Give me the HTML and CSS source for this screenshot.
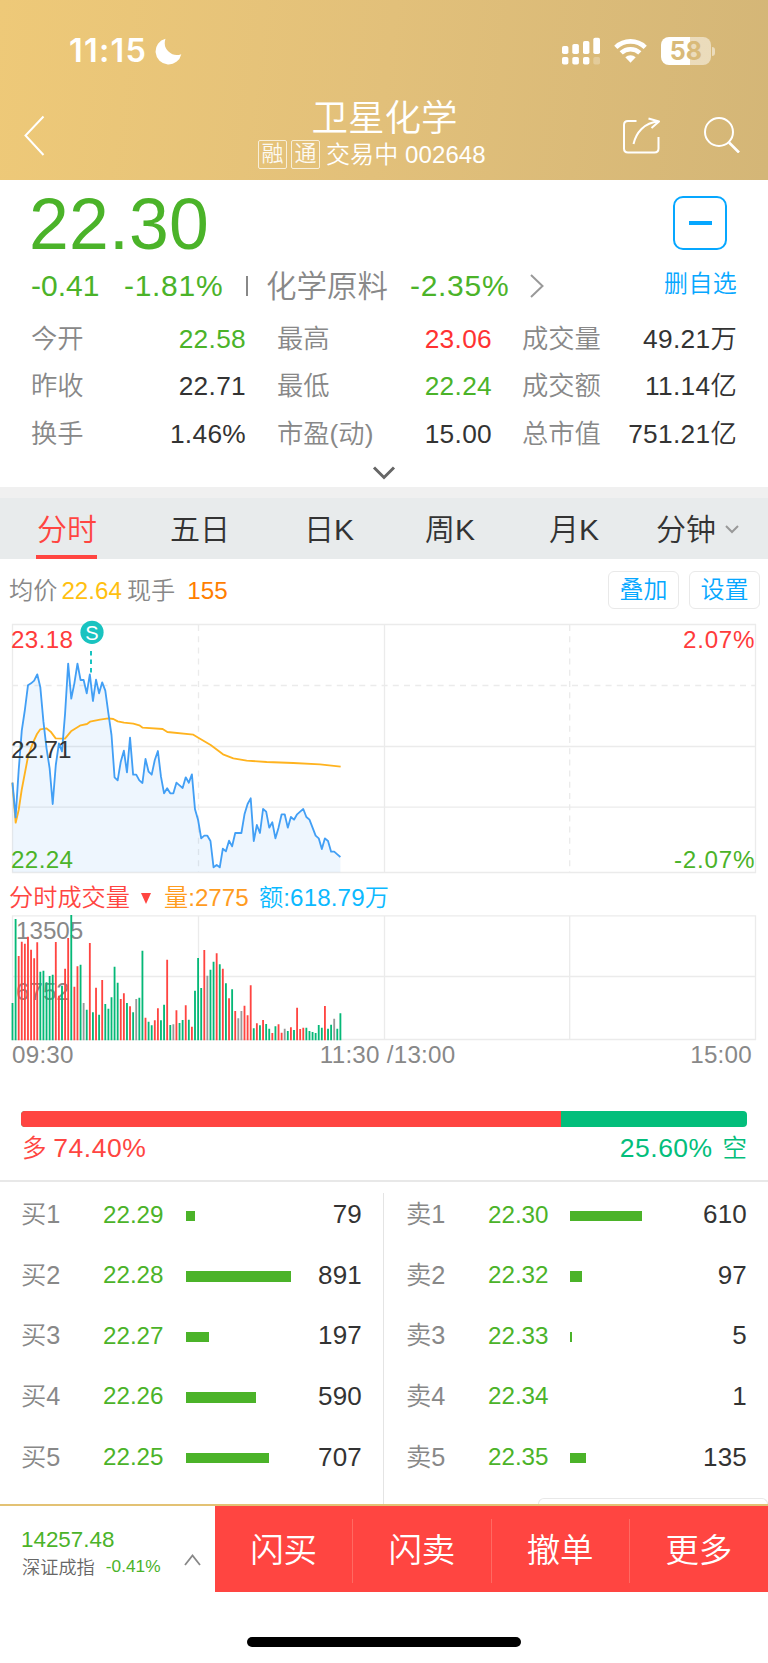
FILE: index.html
```html
<!DOCTYPE html>
<html lang="zh-CN">
<head>
<meta charset="utf-8">
<meta name="viewport" content="width=device-width">
<title>卫星化学 002648</title>
<link rel="stylesheet" href="styles.css">
</head>
<body>
<header class="header">
  <div class="status">
    <span class="clock">11:15</span>
    <svg class="moon" width="27" height="27" viewBox="0 0 27 27"><path d="M10.5 .8A13 13 0 1 0 26.3 16.2 12.2 12.2 0 0 1 10.5 .8Z" fill="#fff"/></svg>
    <svg class="signal" width="39" height="28" viewBox="0 0 39 28" fill="#fff">
      <rect x="0" y="9" width="6.4" height="8" rx="1.8"/><rect x="10.3" y="7" width="6.6" height="10" rx="1.8"/><rect x="21" y="4" width="6.4" height="13" rx="1.8"/><rect x="31.3" y=".7" width="6.7" height="16.3" rx="1.8"/>
      <rect x="0" y="20" width="6.4" height="7.5" rx="1.8"/><rect x="10.3" y="20" width="6.6" height="7.5" rx="1.8"/><rect x="21" y="20" width="6.4" height="7.5" rx="1.8"/><rect x="31.3" y="20" width="6.7" height="7.5" rx="1.8" opacity=".25"/>
    </svg>
    <svg class="wifi" width="33" height="26" viewBox="0 0 33 26" fill="none" stroke="#fff" stroke-width="4.6">
      <path d="M1.800 9.300A21.300 21.300 0 0 1 31.200 9.300M7.200 14.900A13.500 13.500 0 0 1 25.800 14.900"/>
      <path d="M11.300 19.300A7.500 7.500 0 0 1 21.700 19.300L16.500 24.800Z" fill="#fff" stroke="none"/>
    </svg>
    <div class="battery"><span>58</span></div>
    <i class="battery-tip"></i>
  </div>
  <div class="nav">
    <svg class="back" width="24" height="42" viewBox="0 0 24 42"><path d="M20.500 1.500 2.500 20.500 20.500 40" fill="none" stroke="#fff" stroke-width="2"/></svg>
    <div class="title">
      <h1>卫星化学</h1>
      <div class="subtitle"><b>融</b><b>通</b><span>交易中 002648</span></div>
    </div>
    <svg class="share" width="38" height="38" viewBox="0 0 38 38" fill="none" stroke="#fff" stroke-width="2" stroke-linejoin="round">
      <path d="M14.500 4H6Q2 4 2 8V31.500Q2 35.500 6 35.500H32.500Q36.500 35.500 36.500 31.500V20"/><path d="M11.500 27C14 16 22 5.500 36.500 4.500M26.500 1.500 37 4.500 29.500 11"/>
    </svg>
    <svg class="search" width="36" height="36" viewBox="0 0 36 36" fill="none" stroke="#fff" stroke-width="2"><circle cx="15" cy="15" r="14"/><path d="M25 25.500 35 35.500" stroke-width="2.600"/></svg>
  </div>
</header>

<section class="quote">
  <div class="price-row"><span class="price">22.30</span><span class="minus"><i></i></span></div>
  <div class="change-row">
    <span class="chg">-0.41</span><span class="pct">-1.81%</span><i class="bar"></i>
    <span class="sector">化学原料</span><span class="sector-pct">-2.35%</span>
    <svg width="14" height="24" viewBox="0 0 14 24"><path d="M1 1 12.500 12 1 23" fill="none" stroke="#999" stroke-width="2"/></svg>
    <span class="remove">删自选</span>
  </div>
  <div class="stats">
    <span>今开</span><em class="down">22.58</em><span>最高</span><em class="up">23.06</em><span>成交量</span><em>49.21万</em>
    <span>昨收</span><em>22.71</em><span>最低</span><em class="down">22.24</em><span>成交额</span><em>11.14亿</em>
    <span>换手</span><em>1.46%</em><span>市盈(动)</span><em>15.00</em><span>总市值</span><em>751.21亿</em>
  </div>
  <svg class="expand" width="24" height="14" viewBox="0 0 24 14"><path d="M2 1.500 12 11.500 22 1.500" fill="none" stroke="#666" stroke-width="3"/></svg>
</section>

<nav class="tabs">
  <span class="active">分时</span><span>五日</span><span>日K</span><span>周K</span><span>月K</span>
  <span class="minutes">分钟<svg width="14" height="9" viewBox="0 0 14 9"><path d="M1 1 7 7 13 1" fill="none" stroke="#999" stroke-width="2"/></svg></span>
</nav>

<div class="info">
  <span class="lbl">均价</span><span class="avg">22.64</span><span class="lbl">现手</span><span class="vol">155</span>
  <button class="btn">叠加</button><button class="btn">设置</button>
</div>

<svg class="chart" width="768" height="260" viewBox="0 618 768 260">
  <g class="grid">
    <path d="M12.500 624.500H755.500V872.500H12.500ZM384.500 624V872M12 746.500H755M12 807.200H755"/>
    <path class="dash" d="M12 685.500H755M198.500 625V872M569.700 625V872"/>
  </g>
  <g id="price" transform="translate(0 610) scale(.33333)"></g>
  <path d="M91 651V673" stroke="#19c3c0" stroke-width="2" stroke-dasharray="4.500 4"/>
  <circle cx="92" cy="632.300" r="11.600" fill="#19c3c0"/>
  <text x="92" y="639.500" class="mark" text-anchor="middle">S</text>
  <text x="11" y="648" class="up" textLength="62">23.18</text>
  <text x="11" y="758">22.71</text>
  <text x="11" y="867.500" class="down" textLength="62">22.24</text>
  <text x="754.500" y="648" class="up" text-anchor="end" textLength="71.500">2.07%</text>
  <text x="754.500" y="867.500" class="down" text-anchor="end" textLength="80.500">-2.07%</text>
</svg>

<div class="vol-head"><span class="name">分时成交量</span><i class="tri"></i><span class="amt">量:2775</span><span class="sum">额:618.79万</span></div>

<svg class="chart" width="768" height="130" viewBox="0 911 768 130">
  <g class="grid"><path d="M12.500 915.800H755.500V1039.500H12.500ZM198.500 916V1039M384.500 916V1039M569.700 916V1039M12 976.500H755"/></g>
  <text x="16" y="939" class="grey">13505</text>
  <text x="16" y="1000" class="grey">6752</text>
  <g id="volume" transform="translate(0 875) scale(.33333)"></g>
</svg>
<div class="times"><span>09:30</span><span class="mid">11:30 /13:00</span><span>15:00</span></div>

<section class="ratio">
  <div class="ratio-bar"><i style="width:74.4%"></i></div>
  <div class="ratio-text"><span class="long">多 <u>74.40%</u></span><span class="short"><u>25.60%</u> 空</span></div>
</section>

<section class="book">
  <div class="side">
    <div class="row"><span>买1</span><em>22.29</em><i style="width:9px"></i><b>79</b></div>
    <div class="row"><span>买2</span><em>22.28</em><i style="width:105px"></i><b>891</b></div>
    <div class="row"><span>买3</span><em>22.27</em><i style="width:23px"></i><b>197</b></div>
    <div class="row"><span>买4</span><em>22.26</em><i style="width:70px"></i><b>590</b></div>
    <div class="row"><span>买5</span><em>22.25</em><i style="width:83px"></i><b>707</b></div>
  </div>
  <div class="side sell">
    <div class="row"><span>卖1</span><em>22.30</em><i style="width:72px"></i><b>610</b></div>
    <div class="row"><span>卖2</span><em>22.32</em><i style="width:12px"></i><b>97</b></div>
    <div class="row"><span>卖3</span><em>22.33</em><i style="width:1.5px"></i><b>5</b></div>
    <div class="row"><span>卖4</span><em>22.34</em><i style="width:0"></i><b>1</b></div>
    <div class="row"><span>卖5</span><em>22.35</em><i style="width:16px"></i><b>135</b></div>
    <div class="peek"></div>
  </div>
</section>

<footer class="bottom">
  <div class="index">
    <div><p class="idx">14257.48</p><p class="idx-sub"><span>深证成指</span><em>-0.41%</em></p></div>
    <svg width="17" height="12" viewBox="0 0 17 12"><path d="M1 11 8.500 1.500 16 11" fill="none" stroke="#888" stroke-width="1.800"/></svg>
  </div>
  <div class="actions"><span>闪买</span><span>闪卖</span><span>撤单</span><span>更多</span></div>
</footer>
<div class="home"></div>
<script src="chart.js"></script>
</body>
</html>
```
FILE: styles.css
```css
* { box-sizing: border-box; margin: 0; padding: 0; }
body {
  width: 768px; height: 1663px; overflow: hidden; background: #fff; color: #333;
  font-family: "Liberation Sans", "Noto Sans CJK SC", sans-serif;
  font-weight: 350; line-height: 1; white-space: nowrap;
}
em, i { font-style: normal; }
b, h1 { font-weight: 350; }
u { text-decoration: none; }
svg { display: block; flex: none; }
.up { color: #ff3232; }
.down { color: #4bb329; }

.header { height: 180px; background: linear-gradient(97deg, #eec978 0%, #e2c07a 50%, #d4b677 100%); color: #fff; }
.status { height: 90px; padding: 12px 0 0 69px; display: flex; align-items: center; }
.clock { width: 86px; font: 600 32.5px/32px Inter, sans-serif; letter-spacing: 1.2px; }
.signal { margin-left: 380px; }
.wifi { margin-left: 13px; }
.battery {
  width: 50px; height: 28px; margin-left: 14px; border-radius: 8px; text-align: center;
  background: linear-gradient(90deg, #fff 58%, rgba(255,255,255,.5) 58%);
  font: 700 25px/29px Inter, sans-serif; color: #d9ba79;
}
.battery-tip { width: 3px; height: 9px; margin-left: 1px; border-radius: 0 4px 4px 0; background: rgba(255,255,255,.5); }
.nav { height: 90px; display: flex; align-items: flex-start; padding-left: 23px; }
.back { margin-top: 25px; }
.title { width: 260px; margin: 0 112px 0 203px; padding-top: 10px; display: flex; flex-direction: column; align-items: center; }
h1 { font-size: 36.5px; line-height: 38px; margin-left: 9px; }
.subtitle { align-self: flex-start; margin-left: 8px; display: flex; align-items: center; height: 33px; gap: 4px; font-size: 24px; }
.subtitle b { width: 29px; height: 29px; border: 1px solid rgba(255,255,255,.8); border-radius: 2px; font-size: 22px; line-height: 26px; text-align: center; opacity: .9; }
.subtitle span { margin-left: 2px; letter-spacing: .1px; }
.share { margin-top: 27px; }
.search { margin: 27px 0 0 44px; }

.quote { height: 307px; padding: 0 31px 0 31px; display: flex; flex-direction: column; }
.price-row { height: 82px; padding-top: 7px; display: flex; justify-content: space-between; align-items: center; }
.price { font-size: 71.5px; color: #4bb329; margin-left: -2px; letter-spacing: .2px; }
.minus { width: 54px; height: 54px; margin: -3px 10px 0 0; border: 2px solid #06a7ff; border-radius: 10px; display: grid; place-items: center; }
.minus i { width: 23px; height: 4px; background: #06a7ff; }
.change-row { height: 48px; display: flex; align-items: center; font-size: 30px; color: #4bb329; }
.chg { width: 93px; }
.pct { width: 122px; letter-spacing: .7px; }
.bar { width: 2px; height: 20px; background: #888; }
.sector { width: 144px; margin-left: 18px; color: #888; font-size: 30.5px; }
.sector-pct { width: 120px; letter-spacing: .7px; }
.remove { margin-left: auto; font-size: 24px; color: #06a7ff; letter-spacing: .3px; margin-top: -4px; }
.stats { display: grid; grid-template-columns: 120px 126px 123px 122px 106px 1fr; grid-auto-rows: 47.7px; align-items: center; padding-top: 5px; font-size: 26.3px; }
.stats span { color: #888; }
.stats em { text-align: right; letter-spacing: .3px; }
.stats em:nth-child(6n+2) { padding-right: 31px; }
.stats em:nth-child(6n+4) { padding-right: 30px; }
.expand { margin: 8px auto 0; }

.tabs { height: 72px; border-top: 11px solid #f0f0f0; background: #e8ebec; display: grid; grid-template-columns: 134px 132px 126px 116px 132px 1fr; font-size: 30px; }
.tabs span { display: flex; justify-content: center; align-items: center; position: relative; padding-top: 2px; }
.tabs .active { color: #ff4541; }
.tabs .active::after { content: ""; position: absolute; left: 36px; bottom: 0; width: 61px; height: 4px; background: #ff4541; }
.tabs .minutes { justify-content: flex-start; padding-left: 16px; }
.tabs svg { margin-left: 9px; }

.info { height: 59px; padding: 2px 8px 0 9px; display: flex; align-items: center; font-size: 24.2px; }
.info span { padding-top: 3px; }
.lbl { color: #888; margin-right: 4px; }
.avg { color: #ffc010; margin-right: 5px; }
.vol { color: #ff7e00; margin: 0 auto 0 8px; }
.btn { width: 71px; height: 38px; margin-left: 10px; border: 1.5px solid #e9e9e9; border-radius: 6px; background: #fff; color: #06a7ff; font: inherit; font-size: 24px; line-height: 35px; }

.chart text { font-size: 24.2px; fill: #333; }
.chart .up { fill: #ff3b3b; }
.chart .down { fill: #4bb329; }
.chart .grey { fill: #888; }
.chart .mark { font-size: 20px; fill: #fff; }
.grid path { fill: none; stroke: #ebebeb; stroke-width: 1.3; }
.grid .dash { stroke-dasharray: 6 5.2; }
.line { fill: none; stroke-width: 5.5; stroke-linejoin: round; }
.now { stroke: #429ff5; }
.mean { stroke: #ffb31f; }
.area { fill: #429ff5; opacity: .09; }
.vbar { fill: none; stroke-width: 5.5; }

.vol-head { height: 33px; padding: 7px 0 0 9px; display: flex; align-items: center; font-size: 24.2px; }
.name { color: #ff4541; width: 132px; }
.tri { border: 5px solid transparent; border-top: 11px solid #ff4541; border-bottom: 0; width: 10px; margin-right: 13px; }
.amt { color: #ff9c1f; width: 95px; }
.sum { color: #0bb9ff; letter-spacing: .1px; }
.times { height: 30px; padding: 0 16px 2px 12px; display: flex; align-items: center; font-size: 24.2px; color: #888; letter-spacing: .25px; }
.times .mid { margin-left: 246px; margin-right: auto; }

.ratio { height: 111px; padding: 40px 21px 0; border-bottom: 2px solid #e8e8e8; }
.ratio-bar { height: 16px; border-radius: 4px; background: #03be7b; overflow: hidden; }
.ratio-bar i { display: block; height: 100%; background: #ff4541; }
.ratio-text { display: flex; justify-content: space-between; padding: 8px 0 0 1px; font-size: 24.5px; }
.ratio-text u { font-size: 26.5px; letter-spacing: .5px; }
.long { color: #ff4541; }
.short { color: #03be7b; word-spacing: 3px; }

.book { height: 322px; display: grid; grid-template-columns: 384px 384px; position: relative; }
.book::before { content: ""; position: absolute; left: 383px; top: 11px; bottom: 0; width: 1px; background: #e4e4e4; }
.side { padding: 3px 22px 0 21px; }
.sell { padding-left: 22px; padding-right: 21px; position: relative; }
.row { height: 60.6px; display: flex; align-items: center; font-size: 26px; }
.row span { width: 82px; color: #888; font-size: 25.3px; margin-top: -1px; }
.row em { width: 83px; color: #4bb329; font-size: 24.2px; margin-top: -1px; }
.sell em { width: 82px; }
.row i { height: 10.5px; background: #4bb329; margin-top: 1px; }
.row b { margin-left: auto; margin-top: -2px; letter-spacing: .2px; }
.peek { position: absolute; left: 154px; right: 0; bottom: 0; height: 6px; border: 1.5px solid #e8e8e8; border-bottom: 0; border-radius: 6px 6px 0 0; }

.bottom { height: 88px; border-top: 2px solid #e3c274; display: flex; }
.index { width: 215px; padding: 23px 14px 0 21px; display: flex; justify-content: space-between; }
.index svg { margin-top: 25px; }
.idx { font-size: 22.4px; color: #4bb329; }
.idx-sub { display: flex; gap: 11px; align-items: center; margin: 8px 0 0 1px; font-size: 18.2px; color: #666; }
.idx-sub em { font-size: 17.3px; color: #4bb329; margin-top: -3px; }
.actions { flex: 1; background: #ff4541; display: grid; grid-template-columns: repeat(4, 1fr); color: #fff; font-size: 33.5px; padding: 13px 0 9px; }
.actions span { display: flex; align-items: center; justify-content: center; border-right: 1px solid #ff6a62; }
.actions span:last-child { border: 0; }
.home { width: 274px; height: 10px; margin: 45px 0 0 247px; border-radius: 5px; background: #000; }
```
FILE: chart.js
```js
const STEP = 9.28, X0 = 37.5;
const x = i => (X0 + STEP * i).toFixed(1);

const price = [518,622,480,362,300,226,220,212,193,232,335,415,475,582,465,400,424,310,161,266,220,161,210,210,250,193,273,209,250,217,242,310,375,502,511,455,422,487,383,494,494,511,519,447,485,494,450,423,500,550,535,550,550,518,526,534,502,518,493,598,630,685,677,677,693,772,765,772,716,724,692,709,669,669,669,613,582,565,693,645,669,597,605,653,637,685,653,613,613,653,621,629,613,605,597,621,629,653,677,685,717,685,693,725,725,733,741];
const mean = "37,518 47,638 56,600 65,540 84,440 98,400 111,372 121,358 139,355 152,365 167,385 195,386 213,364 242,346 261,342 270,335 300,329 325,325 340,327 353,334 372,338 400,341 418,346 428,353 488,357 502,366 580,374 595,383 632,405 669,433 700,445 740,452 800,456 880,459 960,463 1022,470";
const pts = price.map((v, i) => x(i) + "," + v).join(" ");
document.getElementById("price").innerHTML =
  `<polygon class="area" points="${X0},787 ${pts} ${x(price.length - 1)},787"/>` +
  `<polyline class="line mean" points="${mean}"/><polyline class="line now" points="${pts}"/>`;

const volume = "g384 g132 r243 r200 r206 r185 r224 r250 r202 g290 g287 g322 g303 g299 r201 r362 g332 r281 r189 g120 r335 r274 g269 k384 g404 r204 g412 r338 g419 r315 g387 g401 g367 g275 g323 r372 r355 g384 r394 g412 k372 g368 g227 r428 g440 g451 r436 r400 g436 g389 r254 g450 k448 r406 g444 g435 r391 g434 r455 g347 g249 g339 r225 k302 g284 g260 r235 g268 r281 g325 r370 g343 r408 k430 k408 r392 r421 r331 g460 r445 g451 r435 g447 g461 r474 g454 r448 r473 k461 g468 r457 g465 r398 r462 r458 g458 g468 g471 g474 g450 g458 r393 g461 g449 k431 g461 g415".split(" ");
const colors = { g: "#05b877", r: "#ff4541", k: "#999" };
document.getElementById("volume").innerHTML = Object.keys(colors).map(c =>
  `<path class="vbar" stroke="${colors[c]}" d="${volume.map((v, i) => v[0] === c ? `M${x(i)} 496V${v.slice(1)}` : "").join("")}"/>`
).join("");
```
